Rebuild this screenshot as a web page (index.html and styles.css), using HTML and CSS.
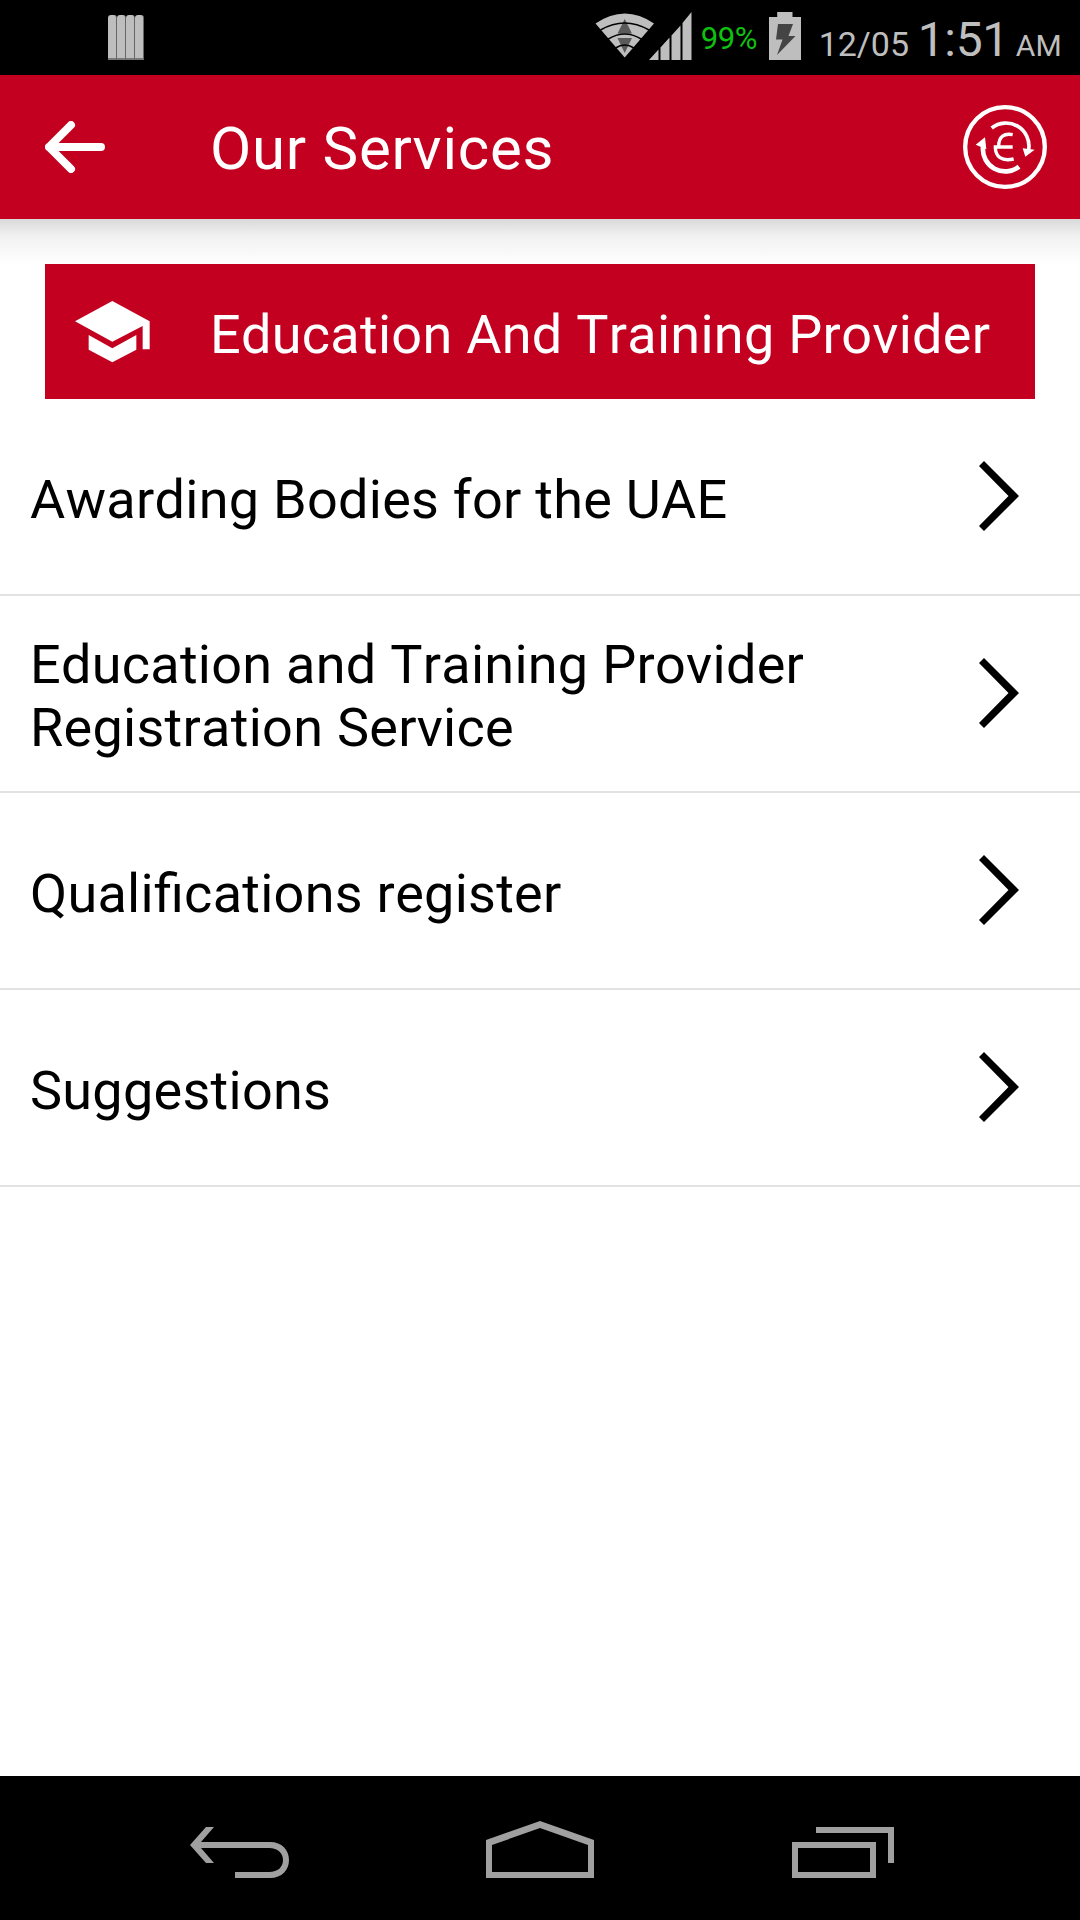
FILE: index.html
```
<!DOCTYPE html>
<html lang="en">
<head>
    <meta charset="UTF-8">
    <meta name="viewport" content="width=device-width, initial-scale=1.0">
    <title>Our Services</title>
    <link rel="stylesheet" href="styles.css">
</head>
<body>
    <div class="screen">
        <!-- Status bar -->
        <div class="status-bar">
            <div class="bars">
                <span></span><span></span><span></span><span></span>
            </div>
            <svg class="wifi" width="60" height="46" viewBox="0 0 60 46">
                <path fill="#bebebe" d="M0.5 10.5Q30 -9.5 59 10.5L29.700 44.5Z"/>
                <path fill="#5a5a5a" d="M29.700 6L37 20.500H22.500Z M22.500 25H37L29.700 40Z"/>
                <g fill="none" stroke="#000" stroke-width="1.500">
                    <path d="M5.500 17Q29.700 3 54 17"/>
                    <path d="M12.500 26.500Q29.700 15.500 47 26.500"/>
                    <path d="M20.500 35Q29.700 29 39 35"/>
                </g>
            </svg>
            <svg class="signal" width="43" height="48" viewBox="0 0 43 48">
                <path fill="#bebebe" d="M0 48L9.500 37.500V48Z M11.500 35.500L20.500 25.500V48H11.500Z M22.500 23.500L31.500 13.500V48H22.500Z M33.500 11L42.500 0V48H33.500Z"/>
            </svg>
            <span class="percent">99%</span>
            <svg class="battery" width="32" height="48" viewBox="0 0 32 48">
                <path fill="#bebebe" d="M8.200 0H23.500V5H32V48H0V5H8.200Z"/>
                <path fill="#444" d="M9 12H24L19.500 24H26.500L8 43L13.500 27.500H7Z"/>
            </svg>
            <span class="date">12/05</span>
            <span class="time">1:51</span>
            <span class="ampm">AM</span>
        </div>

        <!-- Header -->
        <div class="header">
            <svg class="back" width="60" height="52" viewBox="0 0 60 52">
                <path fill="none" stroke="#fff" stroke-width="8" stroke-linecap="round" stroke-linejoin="round" d="M26 4L4 26L26 48M4 26H56"/>
            </svg>
            <h1>Our Services</h1>
            <svg class="currency" width="84" height="84" viewBox="0 0 252 252">
                <g fill="none" stroke="#fff">
                    <circle cx="126" cy="126" r="119.500" stroke-width="13"/>
                    <path stroke-width="11" d="M86 69A69 69 0 0 1 197 134"/>
                    <path stroke-width="14" d="M60 126A67 67 0 0 0 168 185"/>
                    <path stroke-width="10" d="M149 89C124 84 107 94 107 124M92 126H149M97 126C97 155 116 170 152 162"/>
                </g>
                <path fill="#fff" d="M187 155L179 130L215 134Z M66 97L38 119L70 133Z"/>
            </svg>
        </div>
        <div class="header-shadow"></div>

        <!-- Category -->
        <div class="banner">
            <svg class="school" width="75" height="62" viewBox="0 0 225 186">
                <path fill="#fff" d="M0 61L112 0L224 61V145H203V75L112 122Z M41 102L112 142L184 102V146L112 184L41 146Z"/>
            </svg>
            <h2>Education And Training Provider</h2>
        </div>

        <!-- Services -->
        <ul class="services">
            <li>
                <span>Awarding Bodies for the UAE</span>
                <svg class="chevron" width="40" height="70" viewBox="0 0 40 70"><path d="M5 0L40 35L5 70L0 65L29.500 35L0 5Z"/></svg>
            </li>
            <li>
                <span>Education and Training Provider Registration Service</span>
                <svg class="chevron" width="40" height="70" viewBox="0 0 40 70"><path d="M5 0L40 35L5 70L0 65L29.500 35L0 5Z"/></svg>
            </li>
            <li>
                <span>Qualifications register</span>
                <svg class="chevron" width="40" height="70" viewBox="0 0 40 70"><path d="M5 0L40 35L5 70L0 65L29.500 35L0 5Z"/></svg>
            </li>
            <li>
                <span>Suggestions</span>
                <svg class="chevron" width="40" height="70" viewBox="0 0 40 70"><path d="M5 0L40 35L5 70L0 65L29.500 35L0 5Z"/></svg>
            </li>
        </ul>

        <!-- Navigation bar -->
        <div class="nav-bar">
            <svg width="99" height="51" viewBox="0 0 99 51">
                <path fill="#a0a0a0" d="M0 18L16 0H24L11 15H80C92 15 99 23 99 33S92 51 80 51H45V45H79C88 45 93 40 93 33S88 21 79 21H11L24 36H16Z"/>
            </svg>
            <svg class="home" width="108" height="57" viewBox="0 0 108 57">
                <path fill="#a0a0a0" fill-rule="evenodd" d="M0 19L54 0L108 19V57H0Z M6 24V51H102V24L54 7Z"/>
            </svg>
            <svg width="102" height="51" viewBox="0 0 102 51">
                <path fill="#a0a0a0" fill-rule="evenodd" d="M24 0H102V36H96V6H24Z M0 15H84V51H0Z M6 21V45H78V21Z"/>
            </svg>
        </div>
    </div>
</body>
</html>
```
FILE: styles.css
```
/* General Styling */
* {
    box-sizing: border-box;
}
body {
    margin: 0;
    font-family: Roboto, sans-serif;
    font-kerning: none;
    background: #fff;
    color: #000;
}
.screen {
    width: 1080px;
    height: 1920px;
    display: flex;
    flex-direction: column;
    overflow: hidden;
}
h1, h2, ul {
    margin: 0;
    padding: 0;
    font-weight: 400;
}
svg {
    display: block;
    flex: none;
}

/* Status Bar */
.status-bar {
    height: 75px;
    flex: none;
    display: flex;
    align-items: flex-end;
    padding: 0 18px 15px 108px;
    background: #000;
    color: #bebebe;
    white-space: nowrap;
}
.bars {
    display: flex;
    height: 45px;
    margin-right: auto;
}
.bars span {
    width: 9px;
    background: #bebebe;
    border-right: 1.5px solid #666;
    border-bottom: 2px solid #777;
    border-radius: 3px 3px 0 0;
}
.wifi {
    margin: 0 -6px 1px 0;
}
.signal {
    margin-right: 9px;
}
.percent {
    width: 58px;
    margin-right: 10px;
    font-size: 31px;
    line-height: 42px;
    letter-spacing: -0.3px;
    color: #10c010;
}
.battery {
    margin-right: 18px;
}
.date {
    width: 92px;
    margin-right: 7px;
    font-size: 34px;
    line-height: 32px;
}
.time {
    width: 90px;
    margin-right: 8px;
    font-size: 48px;
    line-height: 41px;
    letter-spacing: -0.3px;
}
.ampm {
    font-size: 30px;
    line-height: 29px;
    letter-spacing: 0.3px;
}

/* Header */
.header {
    height: 144px;
    flex: none;
    display: flex;
    align-items: center;
    padding: 0 33px 0 45px;
    background: #c3001f;
    color: #fff;
}
.header h1 {
    flex: 1;
    margin-left: 105px;
    padding-top: 4px;
    font-size: 60px;
    line-height: 70px;
    letter-spacing: 0.75px;
}
.header-shadow {
    height: 45px;
    flex: none;
    background: linear-gradient(#d9d9d9, #f0f0f0 35%, #fff);
}

/* Category Banner */
.banner {
    height: 135px;
    flex: none;
    display: flex;
    align-items: center;
    margin: 0 45px;
    padding-left: 30px;
    background: #c3001f;
    color: #fff;
}
.banner h2 {
    margin-left: 60px;
    padding-top: 5px;
    font-size: 54px;
    line-height: 63px;
    letter-spacing: 0.28px;
    white-space: nowrap;
}

/* Services List */
.services {
    flex: 1;
    list-style: none;
}
.services li {
    height: 197px;
    display: flex;
    align-items: center;
    justify-content: space-between;
    padding: 0 61px 0 30px;
    border-bottom: 2px solid #e2e2e2;
}
.services span {
    max-width: 860px;
    padding-top: 5px;
    font-size: 54px;
    line-height: 63px;
    letter-spacing: 0.27px;
    font-feature-settings: "liga"; /* keep the fi ligature */
}
.chevron {
    margin-bottom: 2px;
}

/* Navigation Bar */
.nav-bar {
    height: 144px;
    flex: none;
    display: flex;
    justify-content: space-between;
    align-items: flex-end;
    padding: 0 186px 42px 190px;
    background: #000;
}
.home {
    margin-right: 2px;
}
```
